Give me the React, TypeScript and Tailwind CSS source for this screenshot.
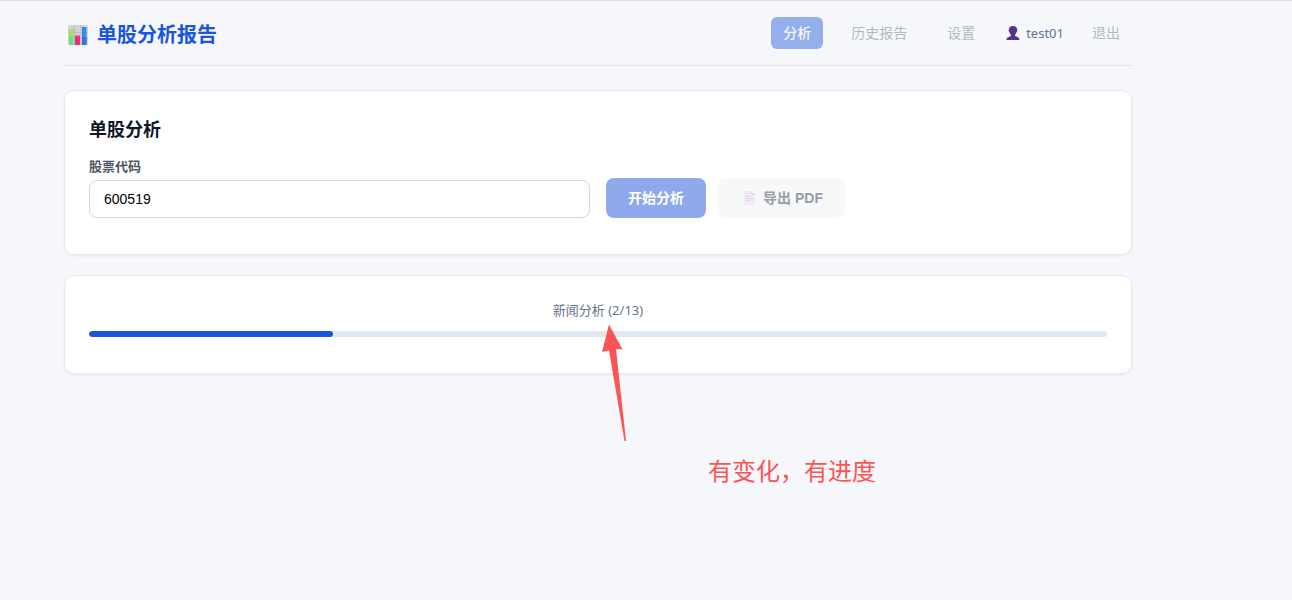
import { useState } from "react";

const navItems = ["历史报告", "设置"];

function ChartIcon() {
  return (
    <svg viewBox="0 0 20 20" className="h-5 w-5" aria-hidden="true">
      <rect width="20" height="20" rx="1.5" fill="#d5d0dc" />
      <path d="M0 7.5h20M0 13.5h20M6.5 0v20M13 0v20" stroke="#b9b3c4" strokeWidth="0.8" />
      <rect x="1" y="4.5" width="4.5" height="15.5" fill="#6fdc8a" />
      <rect x="1" y="4.5" width="4.5" height="7" fill="#a0e35c" />
      <rect x="7" y="10.5" width="5" height="9.5" fill="#e8316f" />
      <rect x="14" y="2" width="4.5" height="18" fill="#2f8fe0" />
      <rect x="14" y="12" width="4.5" height="8" fill="#3b74c4" />
    </svg>
  );
}

function UserIcon() {
  return (
    <svg viewBox="0 0 14 14" className="h-3.5 w-3.5" aria-hidden="true">
      <path
        d="M7 0C4.300 0 2.900 1.500 2.900 3.700C2.400 3.900 2.500 5.300 3.200 5.600C3.500 7 4.100 8 4.900 8.700V10C3 11 0.500 11 0.500 14H13.500C13.500 11 11 11 9.100 10V8.700C9.900 8 10.500 7 10.800 5.600C11.500 5.300 11.600 3.900 11.100 3.700C11.100 1.500 9.700 0 7 0Z"
        fill="#55358a"
      />
    </svg>
  );
}

function FileIcon() {
  return (
    <svg viewBox="0 0 11 14" className="h-3.5 w-[11px]" aria-hidden="true">
      <path d="M0 0H7L11 4V14H0Z" fill="#f1ebf6" />
      <path d="M7 0V4H11Z" fill="#e2d9ea" />
      <path d="M2 5.500H6M2 7.500H9M2 9.500H7" stroke="#ddd4e3" />
    </svg>
  );
}

export default function App() {
  const [code, setCode] = useState("600519");
  const progress = 24;

  return (
    <div className="relative min-h-screen border-t border-[#dfe1e4] bg-[#f5f7fb] pr-40 pl-16 font-['Noto_Sans','Noto_Sans_CJK_SC',sans-serif] text-sm">
      <header className="flex items-center justify-between border-b border-[#e2e6ec] py-4">
        <h1 className="flex items-center gap-2 pt-1 pl-1 text-xl leading-7 font-bold text-[#1a56db]">
          <ChartIcon />
          <span className="pl-px">单股分析报告</span>
        </h1>
        <nav className="flex items-center gap-4">
          <button className="h-8 rounded-md bg-[#94afec] px-3 font-medium text-[#f2f6fe]">分析</button>
          {navItems.map((item) => (
            <button key={item} className="h-8 px-3 text-[#b3b9c3]">
              {item}
            </button>
          ))}
          <span className="flex items-center gap-1.5 pl-[3px] text-[13px] text-[#64748b]">
            <UserIcon />
            test01
          </span>
          <button className="h-8 px-3 text-[#b3b9c3]">退出</button>
        </nav>
      </header>

      <main className="flex flex-col gap-5 pt-6">
        <section className="rounded-[10px] border border-[#e6eaf0] bg-white p-6 pb-9 shadow-[0_1px_3px_rgba(0,0,0,0.06)]">
          <h2 className="mb-[13px] text-lg leading-7 font-bold text-[#111827]">单股分析</h2>
          <div className="grid grid-cols-2 items-end gap-4">
            <div>
              <label htmlFor="code" className="block text-[13px] leading-5 font-semibold text-[#4b5563]">
                股票代码
              </label>
              <input
                id="code"
                value={code}
                onChange={(e) => setCode(e.target.value)}
                className="mt-1 block h-[38px] w-full rounded-lg border border-[#d0d8e4] bg-white px-3.5 font-['Liberation_Sans',sans-serif] text-sm text-black outline-none"
              />
            </div>
            <div className="flex gap-3 font-['Liberation_Sans','Noto_Sans_CJK_SC',sans-serif] font-bold">
              <button disabled className="h-10 w-[100px] rounded-lg bg-[#8eaaec] text-white">
                开始分析
              </button>
              <button
                disabled
                className="flex h-10 w-[127px] items-center justify-center gap-2 rounded-lg bg-[#f7f8fa] pl-1 text-[#989da6]"
              >
                <FileIcon />
                导出 PDF
              </button>
            </div>
          </div>
        </section>

        <section className="rounded-[10px] border border-[#e6eaf0] bg-white p-6 pb-9 shadow-[0_1px_3px_rgba(0,0,0,0.06)]">
          <p className="text-center text-[13px] leading-5 text-[#64748b]">新闻分析 (2/13)</p>
          <div className="mt-[11px] h-1.5 overflow-hidden rounded-full bg-[#e2e8f0]">
            <div className="h-full rounded-full bg-[#1a56db]" style={{ width: `${progress}%` }} />
          </div>
        </section>
      </main>

      <svg viewBox="0 0 22 118" className="absolute top-[323px] left-[602px] h-[118px] w-[22px] overflow-visible" aria-hidden="true">
        <path d="M7 0.500L20.500 25.500L14 25L24 117H22.500L7 26.500L0 28Z" fill="#fb5454" />
      </svg>
      <p className="absolute top-[452px] left-[708px] text-2xl leading-9 text-[#fb5454]">有变化，有进度</p>
    </div>
  );
}
